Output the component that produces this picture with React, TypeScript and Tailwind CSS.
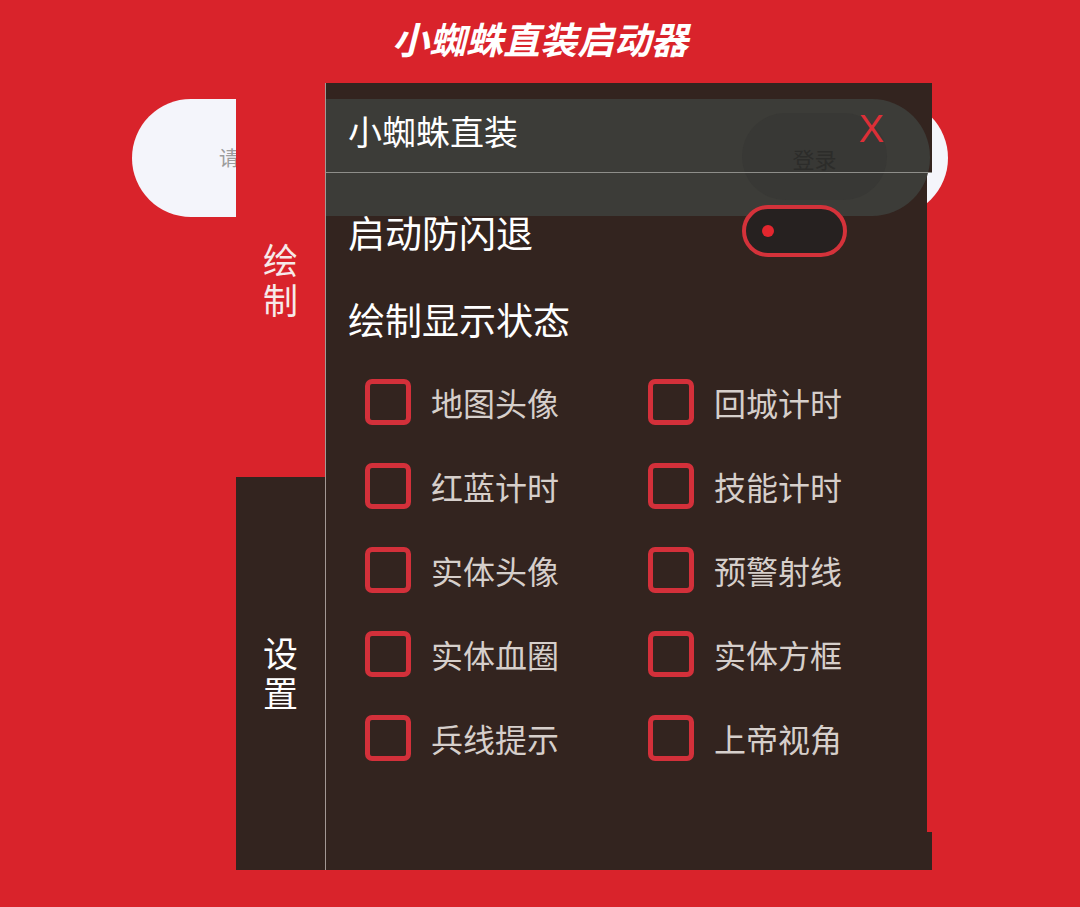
import React from "react";

const font = { fontFamily: '"Noto Sans CJK SC", "Noto Sans", sans-serif' };

function Check({ label }: { label: string }) {
  return (
    <div className="flex items-center h-[46px]">
      <div className="w-[46px] h-[46px] border-[5px] border-[#d3303a] rounded-[7px] shrink-0" />
      <span className="ml-[20px] text-[32px] leading-none text-[#d6cfcb]">{label}</span>
    </div>
  );
}

export default function App() {
  const items = [
    "地图头像",
    "回城计时",
    "红蓝计时",
    "技能计时",
    "实体头像",
    "预警射线",
    "实体血圈",
    "实体方框",
    "兵线提示",
    "上帝视角",
  ];
  return (
    <div className="relative w-full h-[907px] bg-[#d9232b] overflow-hidden" style={font}>
      {/* title */}
      <div className="h-[76px] flex items-center justify-center">
        <h1 className="text-[37px] font-bold italic text-white leading-none">小蜘蛛直装启动器</h1>
      </div>

      {/* login bar behind the floating panel */}
      <div className="absolute left-[132px] top-[99px] w-[816px] h-[118px] rounded-full bg-[#f4f5fb] flex items-center pl-[87px]">
        <span className="text-[20px] text-[#9c9c9c]">请输入卡密</span>
      </div>

      {/* floating panel */}
      <div className="absolute left-[236px] top-[83px] w-[696px] h-[787px] flex">
        {/* sidebar */}
        <div className="w-[89px] flex flex-col">
          <div className="h-[394px] bg-[#d9232b] flex items-center justify-center">
            <span className="[writing-mode:vertical-rl] [text-orientation:upright] text-[35px] leading-none tracking-[5px] text-[#f6eaea] mt-[5px]">
              绘制
            </span>
          </div>
          <div className="flex-1 bg-[#33241f] flex items-center justify-center">
            <span className="[writing-mode:vertical-rl] [text-orientation:upright] text-[35px] leading-none tracking-[5px] text-white mt-[5px]">
              设置
            </span>
          </div>
        </div>
        <div className="w-px bg-[#a39894]" />

        {/* content */}
        <div className="relative w-[606px] flex flex-col">
          <div className="h-[90px] bg-[#33241f] w-full" />
          <div className="flex-1 w-[601px] bg-[#33241f]" />
          <div className="h-[38px] bg-[#33241f] w-full" />

          {/* translucent login pill overlaying the header */}
          <div className="absolute left-0 top-[16px] w-[604px] h-[117px] rounded-r-[58px] bg-[#3c3c38]">
            <div className="absolute left-[416px] top-[14px] w-[145px] h-[87px] rounded-full bg-[#383835] flex items-center justify-center">
              <span className="text-[22px] text-[#2c2c2a] mt-[3px]">登录</span>
            </div>
          </div>

          {/* actual content */}
          <div className="absolute inset-0 flex flex-col">
            <div className="h-[90px] flex items-center justify-between pl-[22px] pr-[48px] border-b border-[#8e8e8a]">
              <span className="text-[34px] leading-none text-white mt-[6px]">小蜘蛛直装</span>
              <span className="text-[38px] leading-none text-[#dc2f37] font-light mt-[2px]" style={{ fontFamily: '"Liberation Sans", sans-serif' }}>
                X
              </span>
            </div>
            <div className="mt-[32px] h-[52px] flex items-center justify-between pl-[22px] pr-[85px]">
              <span className="text-[37px] leading-none text-white mt-[2px]">启动防闪退</span>
              <div className="w-[105px] h-[52px] rounded-full border-[4px] border-[#d4323a] bg-[#262120] flex items-center pl-[16px]">
                <div className="w-[12px] h-[12px] rounded-full bg-[#e3262e]" />
              </div>
            </div>
            <div className="mt-[40px] h-[44px] flex items-center pl-[22px]">
              <span className="text-[37px] leading-none text-white">绘制显示状态</span>
            </div>
            <div className="mt-[38px] pl-[39px] grid grid-cols-[283px_1fr] gap-y-[38px]">
              {items.map((t) => (
                <Check key={t} label={t} />
              ))}
            </div>
          </div>
        </div>
      </div>
    </div>
  );
}
